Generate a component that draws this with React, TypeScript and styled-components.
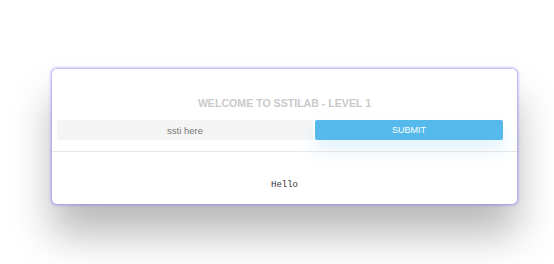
import styled, { createGlobalStyle } from 'styled-components'

const Global = createGlobalStyle`
    body {
        margin: 0;
        background: #ffffff;
        font-family: "Liberation Sans", Arial, sans-serif;
    }
`

const Page = styled.div`
    padding: 69px 37px 0 52px;
    height: 264px;
    box-sizing: border-box;
`

const Card = styled.div`
    background: #ffffff;
    border-radius: 5px;
    height: 135px;
    box-shadow: 0 0 3px 1px rgba(140, 130, 240, 0.75), 0 30px 40px rgba(0, 0, 0, 0.28);
    display: flex;
    flex-direction: column;
`

const Title = styled.h1`
    margin: 28px 0 10px;
    height: 13px;
    line-height: 13px;
    text-align: center;
    font-size: 10.6px;
    font-weight: 700;
    color: #cacaca;
`

const Form = styled.form`
    display: flex;
    gap: 2px;
    padding: 0 14px 0 5px;
    margin: 0;
`

const Input = styled.input`
    width: 256px;
    height: 20px;
    box-sizing: border-box;
    border: none;
    outline: none;
    background: #f5f5f5;
    text-align: center;
    font-family: "Liberation Sans", Arial, sans-serif;
    font-size: 9.5px;
    color: #666;

    &::placeholder {
        color: #757575;
    }
`

const Button = styled.button`
    flex: 1;
    height: 20px;
    border: none;
    border-radius: 2px;
    background: #55b9ec;
    color: #ffffff;
    font-family: "Liberation Sans", Arial, sans-serif;
    font-size: 9px;
    box-shadow: 0 10px 18px rgba(85, 185, 236, 0.18);
`

const Divider = styled.hr`
    border: none;
    border-top: 1px solid #e6e6e6;
    margin: 11px 0 0;
`

const Output = styled.pre`
    margin: 28px 0 0;
    text-align: center;
    font-family: "Liberation Mono", "Courier New", monospace;
    font-size: 9px;
    color: #333;
`

const App = () => {
    return (
        <>
            <Global />
            <Page>
                <Card>
                    <Title>WELCOME TO SSTILAB - LEVEL 1</Title>
                    <Form onSubmit={e => e.preventDefault()}>
                        <Input type="text" placeholder="ssti here" />
                        <Button type="submit">SUBMIT</Button>
                    </Form>
                    <Divider />
                    <Output>Hello</Output>
                </Card>
            </Page>
        </>
    )
}

export default App
